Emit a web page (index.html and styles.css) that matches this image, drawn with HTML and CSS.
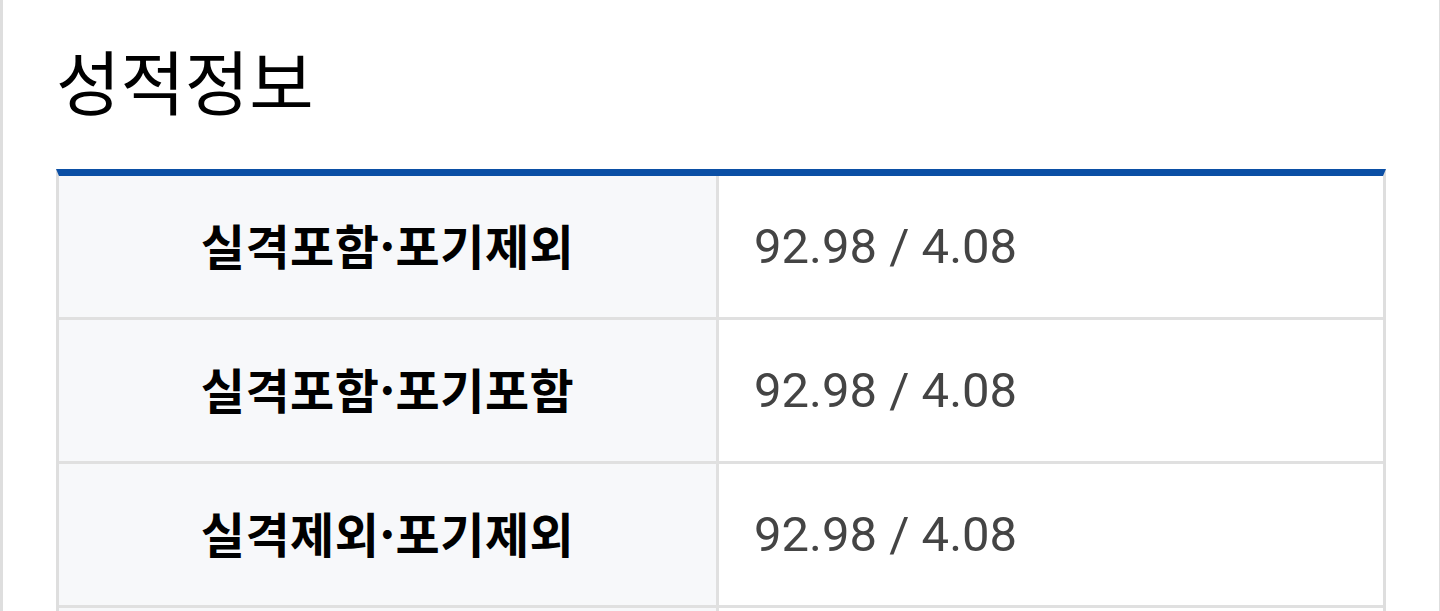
FILE: index.html
```html
<!DOCTYPE html>
<html lang="ko">
<head>
<meta charset="utf-8">
<title>성적정보</title>
<link rel="stylesheet" href="styles.css">
</head>
<body>
<div class="page">
  <h2 class="title">성적정보</h2>
  <div class="grade-table">
    <div class="row">
      <div class="label">실격포함·포기제외</div>
      <div class="value">92.98 / 4.08</div>
    </div>
    <div class="row">
      <div class="label">실격포함·포기포함</div>
      <div class="value">92.98 / 4.08</div>
    </div>
    <div class="row">
      <div class="label">실격제외·포기제외</div>
      <div class="value">92.98 / 4.08</div>
    </div>
    <div class="row">
      <div class="label"></div>
      <div class="value"></div>
    </div>
  </div>
</div>
</body>
</html>
```

FILE: styles.css
```css
* { box-sizing: border-box; }
html, body {
  margin: 0;
  padding: 0;
  background: #ffffff;
  height: 100%;
  overflow: hidden;
}
body {
  font-family: "Noto Sans CJK KR", "Noto Sans", sans-serif;
  color: #000;
}
.page {
  min-height: 100%;
  border-left: 3px solid #dedede;
  border-right: 1px solid #dedede;
  padding: 0 53px;
}
.title {
  margin: 0;
  padding-top: 30px;
  height: 169px;
  font-size: 70px;
  font-weight: 400;
  line-height: 100px;
  letter-spacing: 0;
}
.grade-table {
  border-top: 7px solid #0b4fa5;
  border-left: 3px solid #dedede;
  border-right: 3px solid #dedede;
}
.row {
  display: grid;
  grid-template-columns: 660px 1fr;
  height: 144px;
  border-bottom: 3px solid #e0e0e0;
}
.label {
  background: #f7f8fa;
  border-right: 3px solid #e0e0e0;
  display: flex;
  align-items: center;
  justify-content: center;
  font-size: 48px;
  font-weight: 700;
  letter-spacing: 0.5px;
  color: #000;
  padding-bottom: 6px;
}
.value {
  display: flex;
  align-items: center;
  padding-left: 35px;
  font-family: Roboto, "Noto Sans", sans-serif;
  font-size: 49px;
  color: #444;
}
```
